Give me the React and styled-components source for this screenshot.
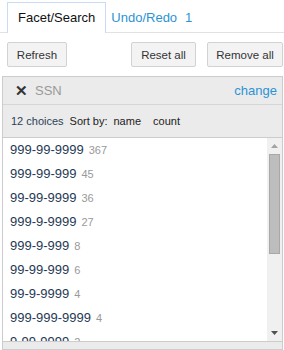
import React from "react";
import styled, { createGlobalStyle } from "styled-components";

const link = "#2b93d4";
const panelBg = "#ebebeb";
const line = "#cccccc";

const Global = createGlobalStyle`
  body {
    margin: 0;
    background: #fff;
    font-family: "Liberation Sans", Arial, sans-serif;
  }
`;

const Page = styled.div`
  width: 284px;
  height: 350px;
  overflow: hidden;
  display: flex;
  flex-direction: column;
`;

const Tabs = styled.div`
  display: flex;
  align-items: flex-end;
  height: 32px;
  padding-left: 7px;
  border-bottom: 1px solid #e2e2e2;
`;

const Tab = styled.div`
  height: 30px;
  margin-bottom: -1px;
  padding: 0 10px 0 10px;
  line-height: 30px;
  font-size: 13px;
  color: ${(p) => (p.$active ? "#111" : link)};
  background: ${(p) => (p.$active ? "#fff" : "transparent")};
  border: 1px solid ${(p) => (p.$active ? "#c8dcf6" : "transparent")};
  border-bottom: none;
  ${(p) => !p.$active && "padding-left: 4px;"}
`;

const Count = styled.span`
  margin-left: 8px;
`;

const ButtonRow = styled.div`
  display: flex;
  justify-content: space-between;
  padding: 9px 1px 0 7px;
`;

const Group = styled.div`
  display: flex;
  gap: 11px;
`;

const Button = styled.button`
  height: 25px;
  width: ${(p) => p.$w}px;
  padding: 0;
  font-family: inherit;
  font-size: 11.5px;
  color: #333;
  background: #f3f3f3;
  border: 1px solid #d2d2d2;
  border-radius: 2px;
`;

const Panel = styled.div`
  margin: 9px 1px 0 2px;
  border: 1px solid ${line};
  background: ${panelBg};
  display: flex;
  flex-direction: column;
  flex: 1;
  min-height: 0;
`;

const Header = styled.div`
  height: 27px;
  display: flex;
  align-items: center;
  padding: 0 5px 0 12px;
  font-size: 13px;
`;

const Close = styled.span`
  font-weight: bold;
  font-size: 15px;
  color: #333;
  margin-right: 7px;
`;

const Name = styled.span`
  color: #999;
  flex: 1;
`;

const Link = styled.span`
  color: ${link};
`;

const SortRow = styled.div`
  height: 32px;
  display: flex;
  align-items: center;
  gap: 6px;
  padding-left: 8px;
  border-top: 1px solid #d6d6d6;
  font-size: 11px;
  color: #222;
`;

const Choices = styled.span`
  color: #2c3f57;
`;

const SortOpt = styled.span`
  margin-left: ${(p) => p.$ml || 0}px;
`;

const ListWrap = styled.div`
  display: flex;
  border-top: 1px solid ${line};
  border-bottom: 1px solid ${line};
  background: #fff;
  height: 203px;
`;

const List = styled.div`
  flex: 1;
  overflow: hidden;
`;

const Item = styled.div`
  height: 24px;
  line-height: 23px;
  padding-left: 7px;
  white-space: nowrap;
  font-size: 13px;
  color: #1f3a55;
`;

const ItemCount = styled.span`
  margin-left: 5px;
  font-size: 11px;
  color: #999;
`;

const Scrollbar = styled.div`
  width: 15px;
  background: #f0f0f0;
  display: flex;
  flex-direction: column;
  align-items: center;
`;

const Arrow = styled.div`
  height: 16px;
  display: flex;
  align-items: center;
  justify-content: center;
`;

const Thumb = styled.div`
  width: 11px;
  height: 100px;
  background: #bdbdbd;
  border: 1px solid #a8a8a8;
  box-sizing: border-box;
`;

const Spacer = styled.div`
  flex: 1;
`;

const Footer = styled.div`
  flex: 1;
`;

const items = [
  ["999-99-9999", 367],
  ["999-99-999", 45],
  ["99-99-9999", 36],
  ["999-9-9999", 27],
  ["999-9-999", 8],
  ["99-99-999", 6],
  ["99-9-9999", 4],
  ["999-999-9999", 4],
  ["9-99-9999", 2],
];

export default function App() {
  return (
    <Page>
      <Global />
      <Tabs>
        <Tab $active>Facet/Search</Tab>
        <Tab>
          Undo/Redo<Count>1</Count>
        </Tab>
      </Tabs>
      <ButtonRow>
        <Button $w={60}>Refresh</Button>
        <Group>
          <Button $w={65}>Reset all</Button>
          <Button $w={76}>Remove all</Button>
        </Group>
      </ButtonRow>
      <Panel>
        <Header>
          <Close>✕</Close>
          <Name>SSN</Name>
          <Link>change</Link>
        </Header>
        <SortRow>
          <Choices>12 choices</Choices>
          <span>Sort by:</span>
          <SortOpt>name</SortOpt>
          <SortOpt $ml={6}>count</SortOpt>
        </SortRow>
        <ListWrap>
          <List>
            {items.map(([v, c]) => (
              <Item key={v}>
                {v}
                <ItemCount>{c}</ItemCount>
              </Item>
            ))}
          </List>
          <Scrollbar>
            <Arrow>
              <svg width="7" height="4" viewBox="0 0 7 4">
                <path d="M0 4 L3.5 0 L7 4 Z" fill="#a3a3a3" />
              </svg>
            </Arrow>
            <Thumb />
            <Spacer />
            <Arrow>
              <svg width="7" height="4" viewBox="0 0 7 4">
                <path d="M0 0 L7 0 L3.5 4 Z" fill="#505050" />
              </svg>
            </Arrow>
          </Scrollbar>
        </ListWrap>
        <Footer />
      </Panel>
    </Page>
  );
}
